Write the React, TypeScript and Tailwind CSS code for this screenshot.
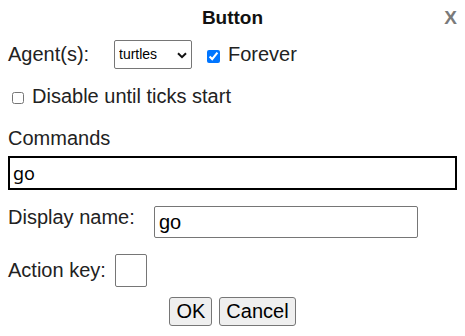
import { useState } from 'react';

export default function App() {
  const [forever, setForever] = useState(true);
  const [disabled, setDisabled] = useState(false);

  return (
    <div
      className="relative w-[465px] h-[336px] bg-white text-[#222] flex flex-col px-[8px]"
      style={{ fontFamily: '"Liberation Sans", Arial, sans-serif' }}
    >
      {/* title */}
      <div className="relative pt-[7px]">
        <div className="text-center text-[19px] leading-[22px] font-bold text-[#111]">Button</div>
        <span className="absolute right-0 top-[7px] text-[19px] leading-[22px] font-bold text-[#7a7a7a]">
          X
        </span>
      </div>

      {/* agents + forever */}
      <div className="mt-[11px] flex items-center h-[29px] text-[20px] leading-[23px]">
        <span className="w-[106px]">Agent(s):</span>
        <div className="relative w-[78px] h-[29px]">
          <select
            defaultValue="turtles"
            className="appearance-none w-full h-full border border-[#767676] rounded-[2px] bg-white pl-[4px] text-[14px] text-black"
            style={{ fontFamily: '"Liberation Sans", Arial, sans-serif' }}
          >
            <option value="turtles">turtles</option>
            <option value="patches">patches</option>
            <option value="links">links</option>
            <option value="observer">observer</option>
          </select>
          <svg
            className="pointer-events-none absolute right-[5px] top-[12px]"
            width="10"
            height="7"
            viewBox="0 0 10 7"
          >
            <path d="M1 1.2 L5 5.2 L9 1.2" fill="none" stroke="#111" strokeWidth="2" />
          </svg>
        </div>
        <input
          type="checkbox"
          checked={forever}
          onChange={(e) => setForever(e.target.checked)}
          className="ml-[15px] m-0 w-[13px] h-[13px] mt-[3px]"
        />
        <span className="ml-[8px]">Forever</span>
      </div>

      {/* disable until ticks */}
      <div className="mt-[16px] flex items-center text-[20px] leading-[23px]">
        <input
          type="checkbox"
          checked={disabled}
          onChange={(e) => setDisabled(e.target.checked)}
          className="ml-[4px] m-0 w-[12px] h-[12px] mt-[2px]"
        />
        <span className="ml-[8px]">Disable until ticks start</span>
      </div>

      {/* commands */}
      <div className="mt-[19px] text-[20px] leading-[23px]">Commands</div>
      <div
        className="mt-[6px] h-[34px] border-2 border-black pl-[3px] text-[18px] leading-[30px] font-normal text-black"
        style={{ fontFamily: '"Noto Sans", "Open Sans", sans-serif' }}
      >
        go
      </div>

      {/* display name */}
      <div className="mt-[16px] flex items-start text-[20px] leading-[23px]">
        <span className="w-[146px]">Display name:</span>
        <input
          type="text"
          defaultValue="go"
          className="w-[264px] h-[32px] border border-[#767676] rounded-[2px] px-[4px] text-[20px] text-black outline-none"
          style={{ fontFamily: '"Liberation Sans", Arial, sans-serif' }}
        />
      </div>

      {/* action key */}
      <div className="mt-[16px] flex items-center text-[20px] leading-[23px]">
        <span>Action key:</span>
        <input
          type="text"
          className="ml-[9px] w-[32px] h-[33px] border border-[#767676] rounded-[2px] outline-none"
        />
      </div>

      {/* buttons */}
      <div className="mt-[10px] flex justify-center gap-[7px] text-[20px] leading-[23px]">
        <button className="h-[29px] px-[6px] border border-[#767676] rounded-[3px] bg-[#efefef] text-black">
          OK
        </button>
        <button className="h-[29px] px-[6px] border border-[#767676] rounded-[3px] bg-[#efefef] text-black">
          Cancel
        </button>
      </div>
    </div>
  );
}
